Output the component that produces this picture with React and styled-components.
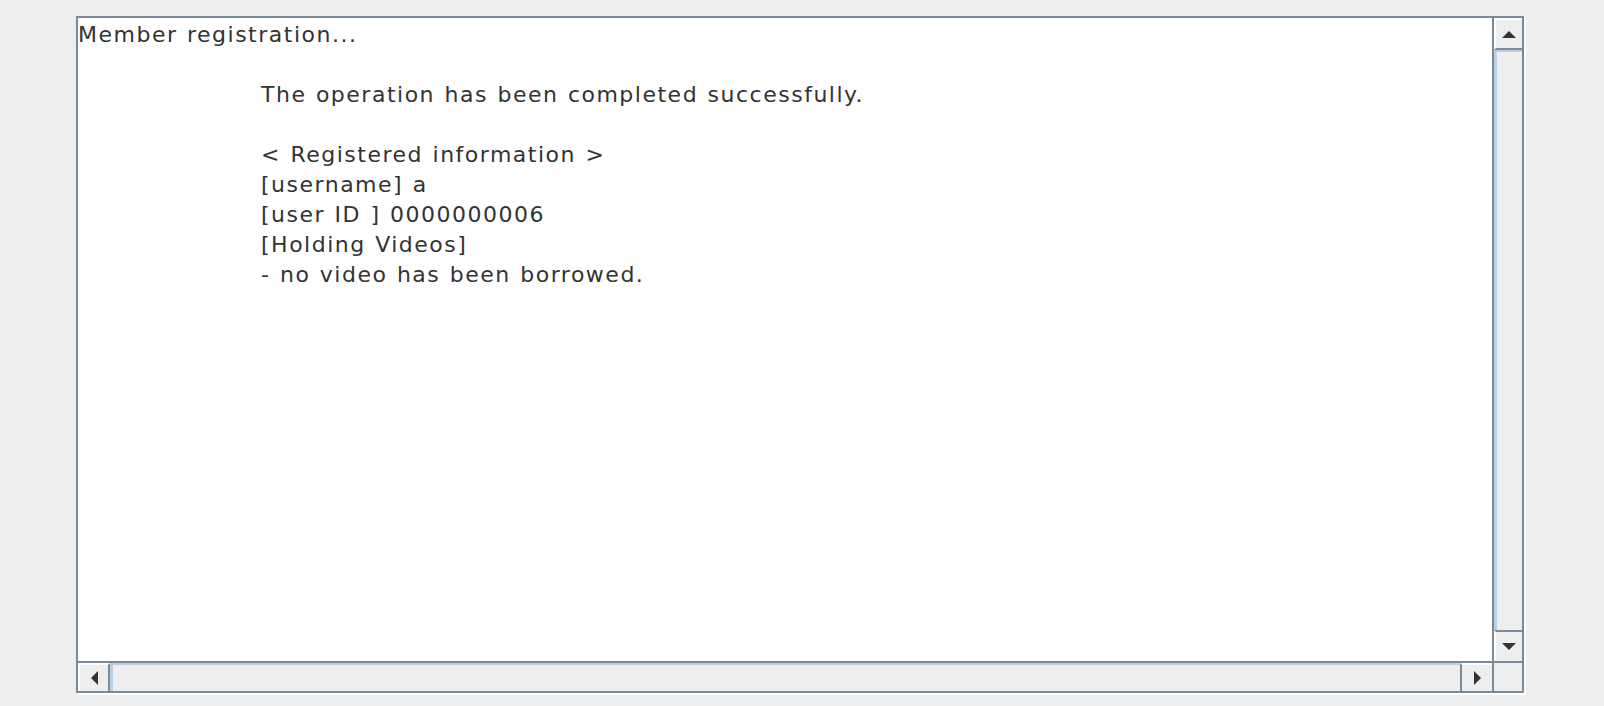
import React from "react";
import styled, { createGlobalStyle } from "styled-components";

const GlobalStyle = createGlobalStyle`
    html, body {
        margin: 0;
        background-color: #eeeeee;
    }
`

const Page = styled.div`
    display: flex;
    padding: 16px 0 0 76px;
    height: 690px;
`
const ScrollPane = styled.div`
    box-sizing: border-box;
    width: 1448px;
    height: 677px;
    border: 2px solid #7a8a99;
    box-shadow: 2px 2px 0 #ffffff;
    display: grid;
    grid-template-columns: 1fr 30px;
    grid-template-rows: 1fr 30px;
    background-color: #eeeeee;
`
const TextArea = styled.div`
    background-color: #ffffff;
    padding: 2px 0 0 0;
    font-family: "DejaVu Sans", "Liberation Sans", sans-serif;
    font-size: 22px;
    letter-spacing: 1.5px;
    word-spacing: 1px;
    line-height: 30px;
    color: #333333;
    white-space: pre;
    overflow: hidden;
`
const Line = styled.div`
    padding-left: ${p => p.$indent ? "183px" : "0"};
    height: 30px;
`
const VBar = styled.div`
    display: flex;
    flex-direction: column;
    border-left: 2px solid #7a8a99;
`
const HBar = styled.div`
    display: flex;
    border-top: 2px solid #7a8a99;
`
const ArrowButton = styled.div`
    box-sizing: border-box;
    flex: 0 0 ${p => p.$size}px;
    display: flex;
    align-items: center;
    justify-content: center;
    background-color: #eeeeee;
    border-top: 2px solid #ffffff;
    border-left: 2px solid #ffffff;
    ${p => p.$edge}: 2px solid #7a8a99;
`
const VTrack = styled.div`
    flex: 1;
    background-color: #eeeeee;
    border-top: 2px solid #b8cfe5;
    border-left: 3px solid #b8cfe5;
`
const HTrack = styled.div`
    flex: 1;
    background-color: #eeeeee;
    border-top: 2px solid #b8cfe5;
    border-left: 3px solid #b8cfe5;
`
const Corner = styled.div`
    background-color: #eeeeee;
    border-top: 2px solid #7a8a99;
    border-left: 2px solid #7a8a99;
`

const arrows = {
    up: "0,7 7,0 14,7",
    down: "0,0 14,0 7,7",
    left: "7,0 7,14 0,7",
    right: "0,0 0,14 7,7",
}

function Arrow({dir}) {
    const vertical = dir === "up" || dir === "down";
    return (
        <svg width={vertical ? 14 : 7} height={vertical ? 7 : 14}>
            <polygon points={arrows[dir]} fill="#333333"/>
        </svg>
    )
}

const lines = [
    ["Member registration...", false],
    ["", false],
    ["The operation has been completed successfully.", true],
    ["", false],
    ["< Registered information >", true],
    ["[username] a", true],
    ["[user ID ] 0000000006", true],
    ["[Holding Videos]", true],
    ["- no video has been borrowed.", true],
]

function App() {
    return (
        <>
            <GlobalStyle/>
            <Page>
                <ScrollPane>
                    <TextArea>
                        {lines.map(([text, indent], i) => (
                            <Line key={i} $indent={indent}>{text}</Line>
                        ))}
                    </TextArea>
                    <VBar>
                        <ArrowButton $size={32} $edge="border-bottom"><Arrow dir="up"/></ArrowButton>
                        <VTrack/>
                        <ArrowButton $size={31} $edge="border-top"><Arrow dir="down"/></ArrowButton>
                    </VBar>
                    <HBar>
                        <ArrowButton $size={32} $edge="border-right"><Arrow dir="left"/></ArrowButton>
                        <HTrack/>
                        <ArrowButton $size={32} $edge="border-left"><Arrow dir="right"/></ArrowButton>
                    </HBar>
                    <Corner/>
                </ScrollPane>
            </Page>
        </>
    )
}

export default App;
